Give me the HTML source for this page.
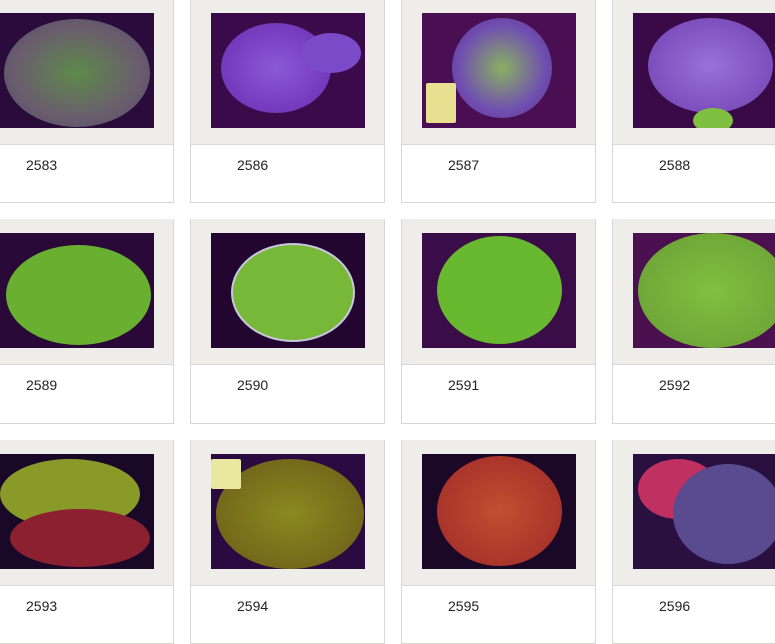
<!DOCTYPE html><html><head><style>
body{margin:0;width:775px;height:625px;overflow:hidden;background:#fff;font-family:"Liberation Sans",Arial,sans-serif;position:relative}
.c{position:absolute;width:195px;height:204px;box-sizing:border-box;border:1px solid #d6d6d4;border-top:none;background:#fff}
.p{position:absolute;left:-1px;top:0;width:195px;height:146px;background:#eeede9;border:1px solid #d8d8d5;border-top:none;box-sizing:border-box}
.im{position:absolute;left:20px;top:14px;width:154px;height:115px;background:#1a0628;overflow:hidden}
.im i{position:absolute;border-radius:50%}
.t{position:absolute;left:46px;top:158px;font-size:14px;color:#222}
</style></head><body>
<!-- row1 -->
<div class="c" style="left:-21px;top:-1px"><div class="p"><div class="im" style="background:#2a0b3c"><i style="left:4px;top:6px;width:146px;height:108px;background:radial-gradient(#5d8a4a,#6a5d6e 60%,#4e4a63)"></i></div></div><div class="t">2583</div></div>
<div class="c" style="left:190px;top:-1px"><div class="p"><div class="im" style="background:#3a0a4a"><i style="left:10px;top:10px;width:110px;height:90px;background:radial-gradient(#8a5ad8,#6a2ab0)"></i><i style="left:90px;top:20px;width:60px;height:40px;background:#7a4ac8"></i></div></div><div class="t">2586</div></div>
<div class="c" style="left:401px;top:-1px"><div class="p"><div class="im" style="background:#4a0e52"><i style="left:30px;top:5px;width:100px;height:100px;background:radial-gradient(#8ab060,#7050b0 60%,#5a2a90)"></i><i style="left:4px;top:70px;width:30px;height:40px;border-radius:2px;background:#e8e090"></i></div></div><div class="t">2587</div></div>
<div class="c" style="left:612px;top:-1px"><div class="p"><div class="im" style="background:#3a0a48"><i style="left:15px;top:5px;width:125px;height:95px;background:radial-gradient(#9a70d8,#7040b0)"></i><i style="left:60px;top:95px;width:40px;height:25px;background:#80c040"></i></div></div><div class="t">2588</div></div>
<!-- row2 -->
<div class="c" style="left:-21px;top:219px;height:205px"><div class="p"><div class="im" style="background:#2a0838"><i style="left:6px;top:12px;width:145px;height:100px;background:#6ab030"></i></div></div><div class="t">2589</div></div>
<div class="c" style="left:190px;top:219px;height:205px"><div class="p"><div class="im" style="background:#220630"><i style="left:20px;top:10px;width:120px;height:95px;background:#78b838;border:2px solid #c8c8e0"></i></div></div><div class="t">2590</div></div>
<div class="c" style="left:401px;top:219px;height:205px"><div class="p"><div class="im" style="background:#3a0c48"><i style="left:15px;top:3px;width:125px;height:108px;background:#68b830"></i></div></div><div class="t">2591</div></div>
<div class="c" style="left:612px;top:219px;height:205px"><div class="p"><div class="im" style="background:#4a1050"><i style="left:5px;top:0;width:150px;height:115px;background:radial-gradient(#80c040,#70a838 70%,#8a60a0)"></i></div></div><div class="t">2592</div></div>
<!-- row3 -->
<div class="c" style="left:-21px;top:440px"><div class="p"><div class="im" style="background:#1a0828"><i style="left:0;top:5px;width:140px;height:70px;background:#8a9a28"></i><i style="left:10px;top:55px;width:140px;height:58px;background:#8a2030"></i></div></div><div class="t">2593</div></div>
<div class="c" style="left:190px;top:440px"><div class="p"><div class="im" style="background:#2a0a40"><i style="left:5px;top:5px;width:148px;height:110px;background:radial-gradient(#8a8a20,#6a5a18)"></i><i style="left:0;top:5px;width:30px;height:30px;border-radius:2px;background:#e8e8a0"></i></div></div><div class="t">2594</div></div>
<div class="c" style="left:401px;top:440px"><div class="p"><div class="im" style="background:#1a0826"><i style="left:15px;top:2px;width:125px;height:110px;background:radial-gradient(#c05030,#a02828)"></i></div></div><div class="t">2595</div></div>
<div class="c" style="left:612px;top:440px"><div class="p"><div class="im" style="background:#2a1040"><i style="left:5px;top:5px;width:80px;height:60px;background:#c03060"></i><i style="left:40px;top:10px;width:110px;height:100px;background:#5a4a90"></i></div></div><div class="t">2596</div></div>
</body></html>
